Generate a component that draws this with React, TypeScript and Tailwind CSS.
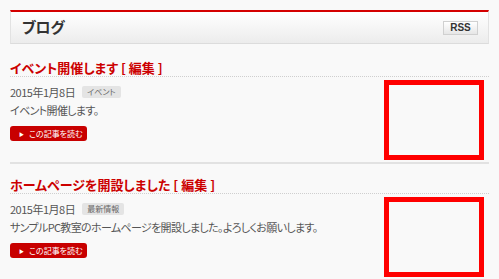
import React from "react";

const FONT = "font-['Noto_Sans_CJK_JP','Liberation_Sans',sans-serif] [font-feature-settings:'palt']";

interface Post {
  title: string;
  date: string;
  tag: string;
  body: string;
}

const POSTS: Post[] = [
  {
    title: "イベント開催します",
    date: "2015年1月8日",
    tag: "イベント",
    body: "イベント開催します。",
  },
  {
    title: "ホームページを開設しました",
    date: "2015年1月8日",
    tag: "最新情報",
    body: "サンプルPC教室のホームページを開設しました。よろしくお願いします。",
  },
];

function PostItem({ post }: { post: Post }) {
  return (
    <div className="border-b-2 border-[#e2e2e2] pt-[13px] pb-[2px]">
      {/* タイトル */}
      <h2 className="h-[17px] border-b border-dotted border-[#cfcfcf] text-[13px] leading-[15px] font-bold text-[#cc0000]">
        {post.title} <span>[ 編集 ]</span>
      </h2>

      <div className="mt-[3px] flex">
        <div className="flex-1 pt-[5px]">
          <div className="flex h-[14px] items-center gap-[7px]">
            <span className="text-[11px] leading-[14px] text-[#555] tracking-[-0.5px]">{post.date}</span>
            <span className="rounded-[2px] bg-[#e4e4e4] px-[5px] text-[8px] leading-[12px] text-[#666]">
              {post.tag}
            </span>
          </div>
          <p className="mt-[3px] text-[11px] leading-[16px] text-[#555] tracking-[-0.65px]">{post.body}</p>
          <button className="mt-[8px] flex h-[15px] w-[77px] items-center rounded-[3px] bg-[#c80000] pl-[9px] text-[8px] leading-[15px] text-white">
            <span className="mr-[5px] text-[5px]">▶</span>
            この記事を読む
          </button>
        </div>
        {/* サムネイル */}
        <div className="mr-[5px] h-[80px] w-[100px] border-[5px] border-[#ff0000] bg-[#f9f9f9]" />
      </div>
    </div>
  );
}

export default function App() {
  return (
    <div className={`min-h-screen bg-[#f9f9f9] px-[10px] pt-[10px] ${FONT}`}>
      {/* 見出し */}
      <div className="flex h-[34px] items-center justify-between border-t-2 border-[#d40000] border-x border-b border-x-[#e2e2e2] border-b-[#dcdcdc] bg-gradient-to-b from-[#ffffff] to-[#ececec] pl-[11px] pr-[10px]">
        <span className="text-[15px] font-bold text-[#333] tracking-[-0.3px]">ブログ</span>
        <span className="flex h-[14px] w-[35px] items-center justify-center border border-[#d0d0d0] bg-gradient-to-b from-[#ffffff] to-[#e6e6e6] font-['Liberation_Sans',sans-serif] text-[10px] font-bold text-[#333]">
          RSS
        </span>
      </div>

      <div className="mt-[3px]">
        {POSTS.map((p) => (
          <PostItem key={p.title} post={p} />
        ))}
      </div>
    </div>
  );
}
